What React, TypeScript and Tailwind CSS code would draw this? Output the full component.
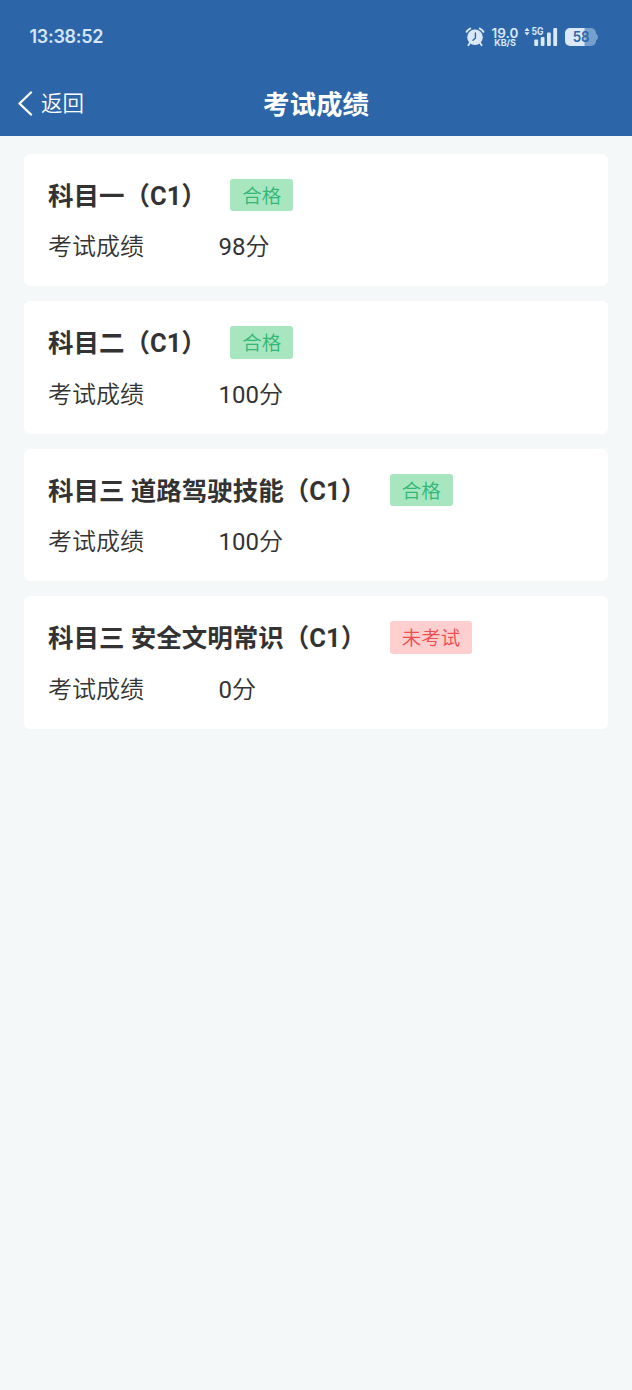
type Result = { title: string; score: number; status: string; passed: boolean };

const results: Result[] = [
  { title: '科目一（C1）', score: 98, status: '合格', passed: true },
  { title: '科目二（C1）', score: 100, status: '合格', passed: true },
  { title: '科目三 道路驾驶技能（C1）', score: 100, status: '合格', passed: true },
  { title: '科目三 安全文明常识（C1）', score: 0, status: '未考试', passed: false },
];

function AlarmIcon() {
  return (
    <svg className="h-[20px] w-[20px]" viewBox="0 0 20 20" fill="none">
      <circle cx="10" cy="10.3" r="7.8" fill="#dbe8f8" />
      <path d="M1.600 4.800Q2.800 2.600 5.200 1.600M18.400 4.800Q17.200 2.600 14.800 1.600" stroke="#dbe8f8" strokeWidth="2" strokeLinecap="round" />
      <path d="m4.8 16-1.400 2.300M15.2 16l1.400 2.300" stroke="#dbe8f8" strokeWidth="1.8" strokeLinecap="round" />
      <path d="M10.4 6v5L8 13.200" stroke="#2c66a9" strokeWidth="1.4" strokeLinecap="round" strokeLinejoin="round" />
    </svg>
  );
}

function SignalIcon() {
  return (
    <svg className="h-[22px] w-[34px]" viewBox="0 0 34 22" fill="#dbe8f8">
      <path d="m3 1.800 2.600 3.200H.4zM3 9.400l2.600-3.200H.4z" />
      <text x="7.6" y="9" fontSize="10" fontWeight="700" fontFamily="Inter, sans-serif" textLength="12" lengthAdjust="spacingAndGlyphs">5G</text>
      <rect x="10.3" y="13.6" width="3.8" height="6.4" rx="1" />
      <rect x="16.7" y="11" width="3.8" height="9" rx="1" />
      <rect x="23" y="6.6" width="3.8" height="13.4" rx="1" />
      <rect x="29.3" y="2" width="3.8" height="18" rx="1" />
    </svg>
  );
}

function BatteryIcon() {
  return (
    <svg className="h-[18px] w-[34px]" viewBox="0 0 34 18">
      <path d="M5 0h14.800v18H5a5 5 0 0 1-5-5V5a5 5 0 0 1 5-5Z" fill="#dbe8f8" />
      <path d="M19.8 0H26a5 5 0 0 1 5 5v8a5 5 0 0 1-5 5h-6.200Z" fill="#769fce" />
      <path d="M31 5.500q2 1 2 3.500t-2 3.500Z" fill="#769fce" />
      <text x="7.700" y="14.300" fontSize="14.500" fontWeight="600" fontFamily="Inter, sans-serif" textLength="17" lengthAdjust="spacingAndGlyphs" fill="#2c66a9">58</text>
    </svg>
  );
}

function StatusBar() {
  return (
    <div className="flex h-[73px] items-center justify-between pl-[29.500px] pr-[33px] font-['Inter',sans-serif] text-[#d5e5fa]">
      <span className="pt-px text-[18px] font-semibold leading-none tracking-[-0.300px]">13:38:52</span>
      <div className="flex items-center">
        <AlarmIcon />
        <div className="ml-[5px] flex w-[30px] flex-col items-center text-[#dbe8f8]">
          <span className="text-[13.500px] font-semibold leading-[12px]">19.0</span>
          <span className="text-[9px] font-bold leading-[8px] tracking-[-0.100px]">KB/S</span>
        </div>
        <div className="ml-[4px]"><SignalIcon /></div>
        <div className="ml-[7px]"><BatteryIcon /></div>
      </div>
    </div>
  );
}

function ResultCard({ title, score, status, passed }: Result) {
  return (
    <section className="h-[132.500px] rounded-[6px] bg-white px-[24px] pt-[25px]">
      <div className="flex h-[33px] items-center gap-[23.500px]">
        <h2 className="whitespace-nowrap pt-[2px] text-[25.500px] font-bold leading-[33px]">{title}</h2>
        <span
          className={`flex h-[32.500px] items-center rounded-[3px] px-[12px] pt-[3px] text-[19.500px] font-[350] leading-none ${
            passed ? 'bg-[#a8e6c0] text-[#31b777]' : 'bg-[#ffcfcf] text-[#ee4d4f]'
          }`}
        >
          {status}
        </span>
      </div>
      <div className="mt-[18.500px] flex text-[24px] font-[350] leading-[34px]">
        <span className="w-[170.500px]">考试成绩</span>
        <span>
          <span className="font-normal">{score}</span>分
        </span>
      </div>
    </section>
  );
}

export default function App() {
  return (
    <div className="min-h-[1390px] w-full bg-[#f4f8f9] font-['Roboto','Noto_Sans_CJK_SC',sans-serif] text-[#333333]">
      <header className="h-[135.500px] bg-[#2c66a9]">
        <StatusBar />
        <div className="grid h-[62px] grid-cols-[1fr_auto_1fr] items-center text-white">
          <button className="flex items-center gap-[8px] pl-[17px] text-[21.500px] font-[350] leading-none">
            <svg className="h-[26px] w-[16px]" viewBox="0 0 16 26" fill="none">
              <path d="M14 1.500 2.500 12.500 14 23.500" stroke="white" strokeWidth="2.400" strokeLinecap="round" strokeLinejoin="round" />
            </svg>
            <span>返回</span>
          </button>
          <h1 className="pt-[2px] text-[26.500px] font-bold leading-none">考试成绩</h1>
        </div>
      </header>
      <main className="flex flex-col gap-[15px] px-[24px] pt-[18px]">
        {results.map((r) => (
          <ResultCard key={r.title} {...r} />
        ))}
      </main>
    </div>
  );
}
